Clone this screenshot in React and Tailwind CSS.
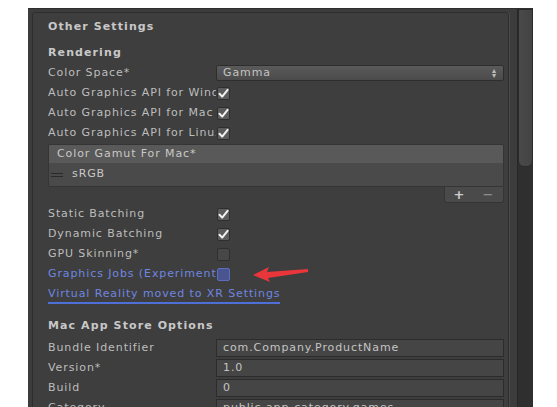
import React from "react";

const F = { fontFamily: '"DejaVu Sans", Verdana, sans-serif' };

function Check({ on = true, variant = "normal" }) {
  const cls =
    variant === "blue"
      ? "bg-[#4a5590] border-[#5b6fc0]"
      : on
      ? "bg-[#5c5c5c] border-[#2f2f2f]"
      : "bg-[#474747] border-[#2f2f2f]";
  return (
    <div className={`w-[13px] h-[13px] rounded-[2px] border ${cls} flex items-center justify-center`}>
      {on && (
        <svg width="11" height="11" viewBox="0 0 11 11">
          <path d="M1.5 5.8 L4.2 8.6 L9.6 1.8" stroke="#f2f2f2" strokeWidth="2" fill="none" strokeLinecap="round" strokeLinejoin="round" />
        </svg>
      )}
    </div>
  );
}

function Label({ children, className = "text-[#bdbdbd]" }) {
  return (
    <div className={`w-[168px] shrink-0 overflow-hidden whitespace-nowrap ${className}`}>{children}</div>
  );
}

function CheckRow({ label, on = true, variant, labelClass }) {
  return (
    <div className="h-[20px] flex items-center">
      <Label className={labelClass}>{label}</Label>
      <div className="ml-[1px]">
        <Check on={on} variant={variant} />
      </div>
    </div>
  );
}

function FieldRow({ label, value }) {
  return (
    <div className="h-[20px] flex items-center">
      <Label>{label}</Label>
      <div className="flex-1 h-[18px] bg-[#454545] border border-[#2c2c2c] flex items-center px-[6px] text-[#c4c4c4] whitespace-nowrap overflow-hidden">
        {value}
      </div>
    </div>
  );
}

export default function App() {
  return (
    <div className="w-[557px] h-[407px] bg-white overflow-hidden pl-[28px] pt-[8px] text-[11px] tracking-[0.9px]" style={F}>
      <div className="w-[505px] h-[420px] bg-[#3c3c3c] border-t border-[#2e2e2e] flex relative">
        <div className="flex-1 pl-[4px] pt-[3px] pr-[2px]">
          <div className="h-full border border-[#2d2d2d] rounded-[3px] bg-[#3e3e3e] pl-[15px] pr-[4px] pt-[4px] mr-[6px] shadow-[1px_0_0_#4a4a4a]">
            <div className="h-[20px] flex items-center font-bold text-[#c8c8c8] tracking-[1.1px]">Other Settings</div>
            <div className="h-[6px]" />
            <div className="h-[20px] flex items-center font-bold text-[#c8c8c8] tracking-[1.1px]">Rendering</div>
            <div className="h-[20px] flex items-center">
              <Label>Color Space*</Label>
              <div className="flex-1 h-[16px] rounded-[2px] bg-gradient-to-b from-[#5a5a5a] to-[#4b4b4b] border border-[#2e2e2e] flex items-center px-[6px] text-[#c4c4c4]">
                <span className="flex-1">Gamma</span>
                <span className="text-[8px] leading-none text-[#bdbdbd] flex flex-col items-center">
                  <span className="leading-[5px]">▴</span>
                  <span className="leading-[5px]">▾</span>
                </span>
              </div>
            </div>
            <CheckRow label="Auto Graphics API for Windows" />
            <CheckRow label="Auto Graphics API for Mac" />
            <CheckRow label="Auto Graphics API for Linux" />
            <div className="mt-[1px] border border-[#353535] rounded-[2px] overflow-hidden">
              <div className="h-[18px] bg-[#595959] flex items-center pl-[8px] text-[#c8c8c8]">Color Gamut For Mac*</div>
              <div className="h-[23px] bg-[#4a4a4a] flex items-center pl-[2px] text-[#c8c8c8]">
                <div className="w-[12px] flex flex-col gap-[2px] mr-[9px]">
                  <div className="h-[1px] bg-[#2a2a2a]" />
                  <div className="h-[1px] bg-[#2a2a2a]" />
                </div>
                sRGB
              </div>
            </div>
            <div className="flex justify-end">
              <div className="w-[60px] h-[16px] bg-[#4a4a4a] rounded-b-[3px] border border-t-0 border-[#353535] flex items-center justify-around text-[#cfcfcf] text-[13px] leading-none">
                <span className="font-bold">+</span>
                <span className="text-[#9a9a9a]">−</span>
              </div>
            </div>
            <div className="h-[1px]" />
            <CheckRow label="Static Batching" />
            <CheckRow label="Dynamic Batching" />
            <CheckRow label="GPU Skinning*" on={false} />
            <CheckRow label="Graphics Jobs (Experimental)*" on={false} variant="blue" labelClass="text-[#6f86e0]" />
            <div className="h-[20px] flex items-center">
              <div className="text-[#6f86e0] border-b-2 border-[#4f6fd8] leading-[14px] pb-[1px] mt-[3px]">Virtual Reality moved to XR Settings</div>
            </div>
            <div className="h-[12px]" />
            <div className="h-[20px] flex items-center font-bold text-[#c8c8c8] tracking-[1.1px]">Mac App Store Options</div>
            <div className="h-[2px]" />
            <FieldRow label="Bundle Identifier" value="com.Company.ProductName" />
            <FieldRow label="Version*" value="1.0" />
            <FieldRow label="Build" value="0" />
            <FieldRow label="Category" value="public.app-category.games" />
          </div>
        </div>
        <div className="w-[16px] shrink-0 bg-[#2f2f2f] border-l border-[#262626] flex flex-col">
          <div className="h-[158px] bg-gradient-to-r from-[#4a4a4a] to-[#434343] border border-[#2a2a2a] rounded-b-[6px]" />
        </div>
        <svg className="absolute left-[225px] top-[257px]" width="56" height="16" viewBox="0 0 56 16">
          <path d="M0 9 L16 1 L14 6 L55 3 L55 6 L15 12 L17 16 Z" fill="#e8363a" />
        </svg>
      </div>
    </div>
  );
}
